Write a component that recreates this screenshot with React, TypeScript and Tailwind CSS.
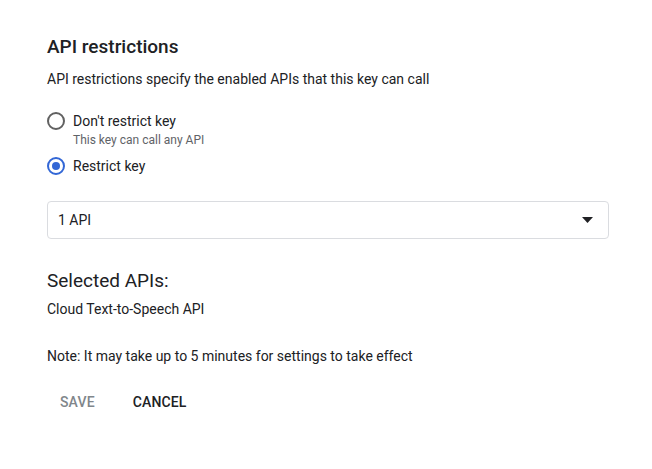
export default function App() {
  return (
    <div className="min-h-[469px] w-[652px] bg-white font-['Roboto',sans-serif] text-[#202124]">
      <div className="px-[47px] pt-[33px]">
        <h2 className="text-[19px] font-medium leading-[28px]">API restrictions</h2>
        <p className="mt-[8px] text-[14px] leading-[20px]">
          API restrictions specify the enabled APIs that this key can call
        </p>

        <div className="mt-[22px] flex flex-col">
          <label className="flex items-start gap-[8px]">
            <span className="mt-[1px] flex h-[18px] w-[18px] items-center justify-center rounded-full border-2 border-[#616161]" />
            <span className="flex flex-col">
              <span className="text-[14px] leading-[20px]">Don't restrict key</span>
              <span className="text-[12px] leading-[18px] text-[#5f6368]">This key can call any API</span>
            </span>
          </label>
          <label className="mt-[7px] flex items-start gap-[8px]">
            <span className="mt-[1px] flex h-[18px] w-[18px] items-center justify-center rounded-full border-2 border-[#3367d6]">
              <span className="h-[8px] w-[8px] rounded-full bg-[#3367d6]" />
            </span>
            <span className="text-[14px] leading-[20px]">Restrict key</span>
          </label>
        </div>

        <div className="mt-[25px] flex h-[38px] w-[562px] items-center justify-between rounded-[4px] border border-[#dadce0] pl-[10px] pr-[15px]">
          <span className="text-[14px]">1 API</span>
          <svg width="11" height="6" viewBox="0 0 11 6">
            <path d="M0 0 L11 0 L5.5 6 Z" fill="#202124" />
          </svg>
        </div>

        <h3 className="mt-[29px] text-[19px] leading-[26px]">Selected APIs:</h3>
        <p className="mt-[5px] text-[14px] leading-[20px]">Cloud Text-to-Speech API</p>

        <p className="mt-[27px] text-[14px] leading-[20px]">
          Note: It may take up to 5 minutes for settings to take effect
        </p>

        <div className="mt-[20px] flex items-center gap-[17px]">
          <button className="h-[32px] px-[13px] text-[14px] font-medium tracking-[0.01em] text-[#80868b]">SAVE</button>
          <button className="h-[32px] px-[8px] text-[14px] font-medium tracking-[0.01em] text-[#202124]">CANCEL</button>
        </div>
      </div>
    </div>
  );
}
